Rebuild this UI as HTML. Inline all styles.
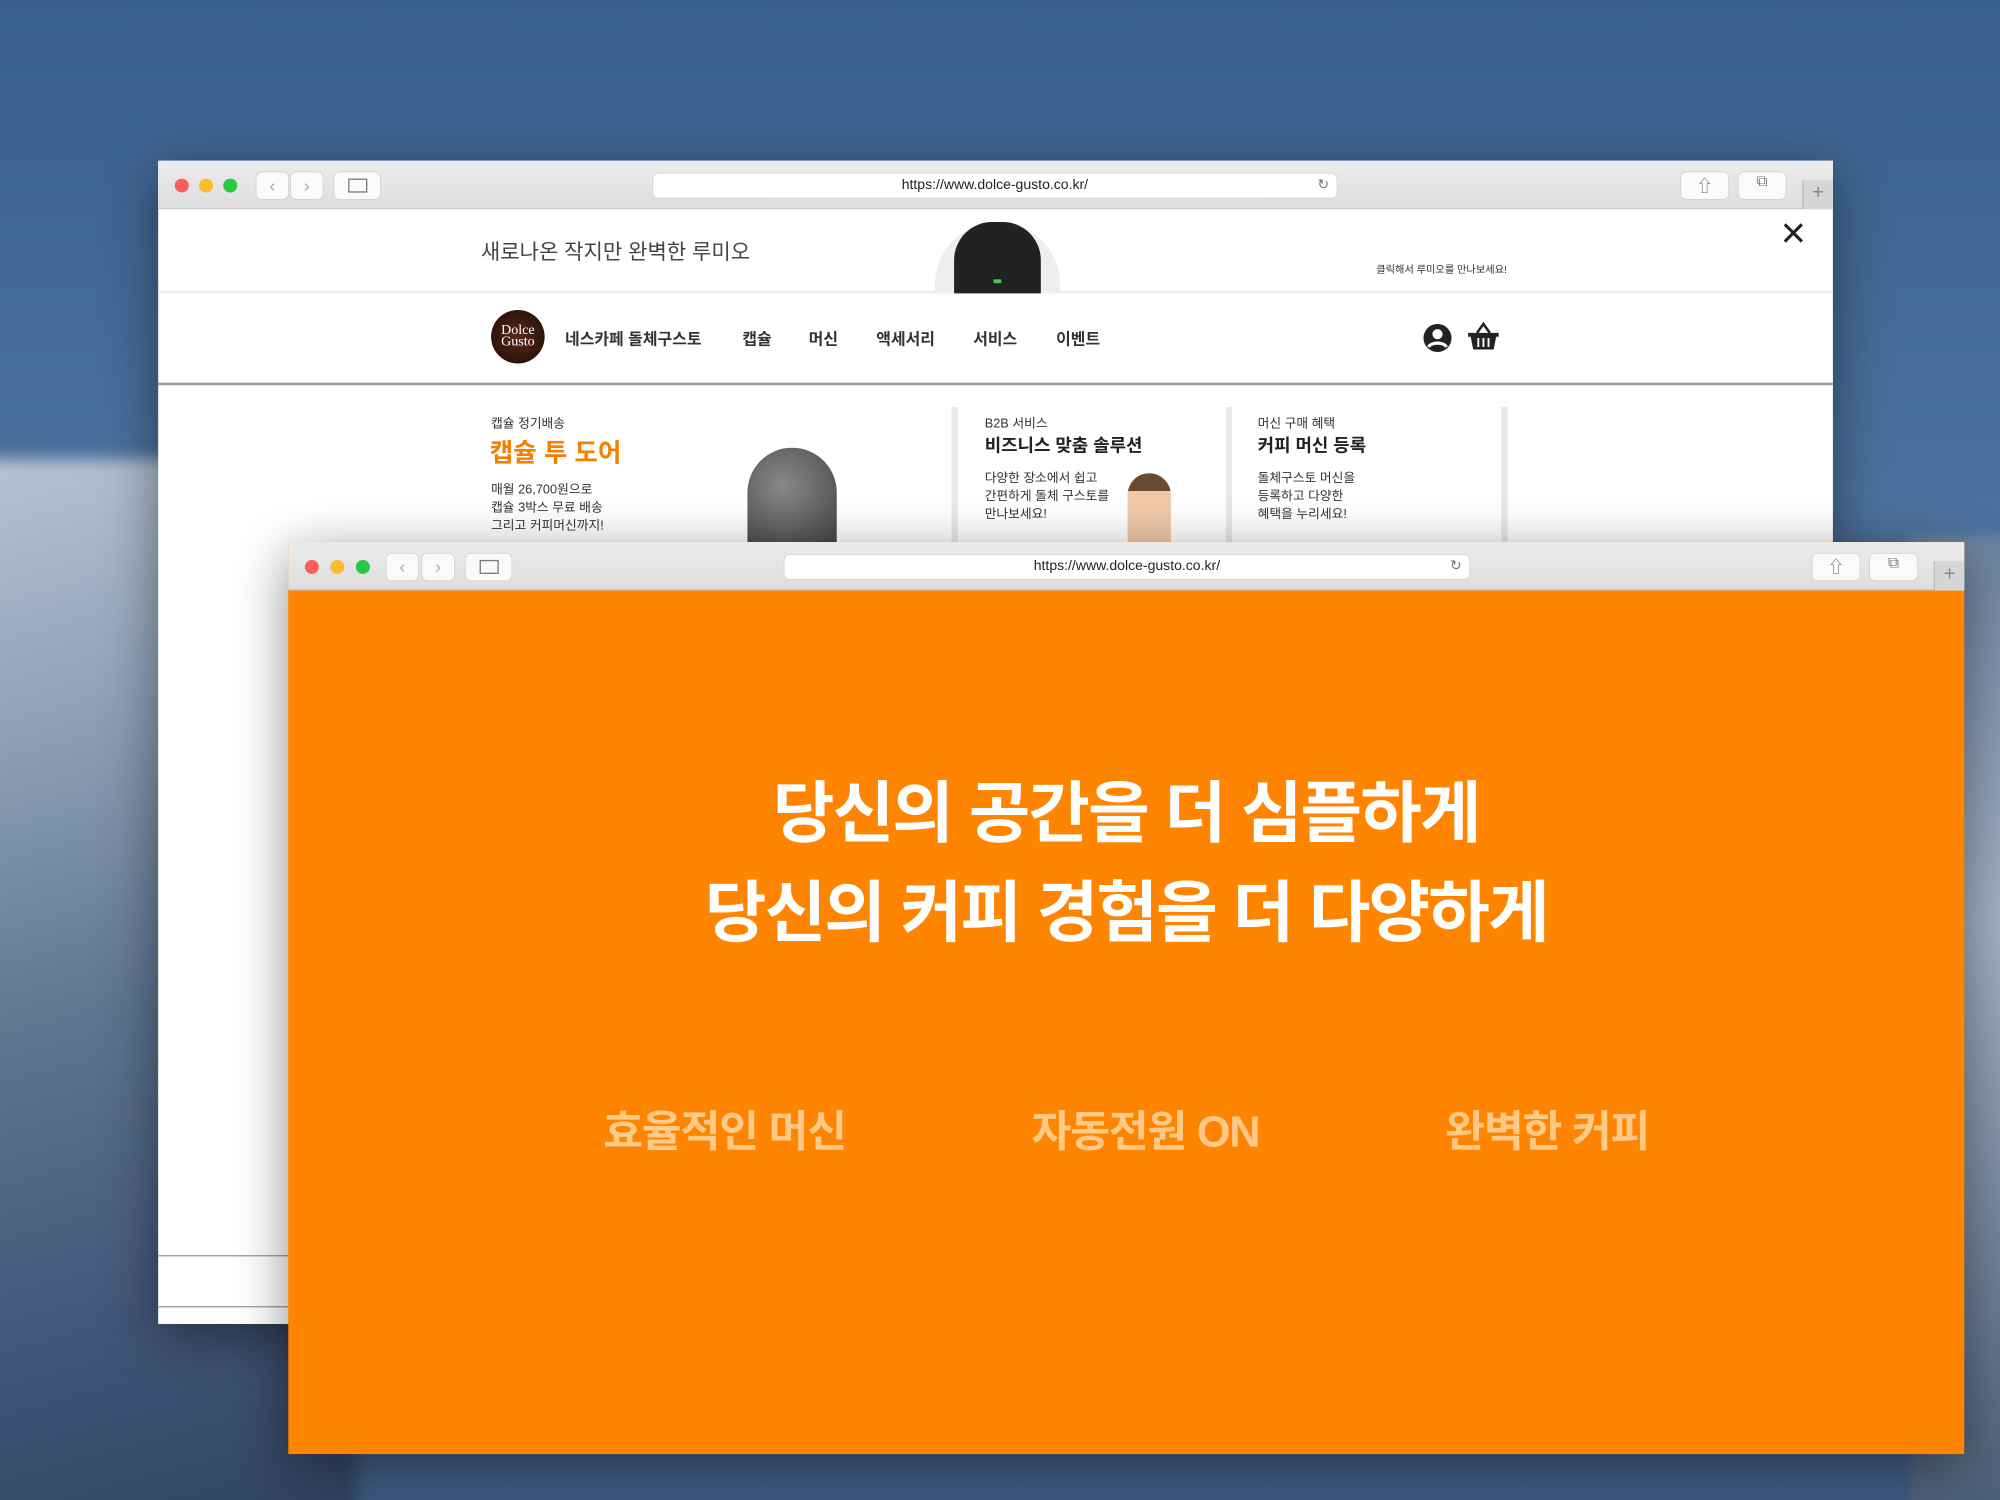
<!DOCTYPE html>
<html><head><meta charset="utf-8"><style>
*{margin:0;padding:0;box-sizing:border-box}
html,body{width:2000px;height:1500px;overflow:hidden}
body{font-family:"Liberation Sans","Noto Sans CJK KR",sans-serif;background:#3f6591}
#s{position:absolute;left:0;top:0;width:1568px;height:1176px;transform:scale(1.27551);transform-origin:0 0;overflow:hidden;
background:linear-gradient(180deg,#3a5f8c 0%,#4a6f9c 30%,#5a7ca6 55%,#6a88ad 75%,#3d5a80 100%)}
.mtn{position:absolute;left:-40px;top:360px;width:320px;height:840px;border-radius:0 80px 0 0;background:linear-gradient(165deg,#b8c4d2 0%,#8da0b5 25%,#5f7590 50%,#44587a 75%,#2f4160 100%);filter:blur(6px)}
.mtn2{position:absolute;right:-10px;top:420px;width:80px;height:760px;background:linear-gradient(180deg,#6d83a0,#a4b2c3 40%,#4c6078);filter:blur(4px)}
.win{position:absolute;background:#fff;box-shadow:0 10px 40px rgba(0,0,0,.45)}
.tb{position:absolute;left:0;top:0;right:0;height:38px;background:linear-gradient(#ececec,#dedede);border-bottom:1px solid #c8c8c8}
.dot{position:absolute;top:14px;width:11px;height:11px;border-radius:50%}
.btn{position:absolute;top:9px;height:21px;background:#fafafa;border-radius:4px;box-shadow:0 0 0 .5px #ccc}
.url{position:absolute;top:10px;height:19px;background:#fff;border-radius:4px;font-size:11px;color:#222;text-align:center;line-height:19px;box-shadow:0 0 0 .5px #ccc}
.plus{position:absolute;right:0;top:15px;width:24px;height:23px;background:#d6d6d6;border-left:1px solid #bbb;color:#888;font-size:16px;text-align:center;line-height:22px}
.t{position:absolute;white-space:nowrap;color:#333}
.b{font-weight:bold}
</style></head><body><div id="s">
<div class="mtn"></div><div class="mtn2"></div>

<!-- back window -->
<div class="win" style="left:124px;top:126px;width:1313px;height:912px">
 <div class="tb">
  <div class="dot" style="left:13px;background:#fc5f57"></div>
  <div class="dot" style="left:32px;background:#fdbc2e"></div>
  <div class="dot" style="left:51px;background:#28c840"></div>
  <div class="btn" style="left:77px;width:25px;color:#aaa;font-size:14px;text-align:center;line-height:20px">‹</div>
  <div class="btn" style="left:104px;width:25px;color:#aaa;font-size:14px;text-align:center;line-height:20px">›</div>
  <div class="btn" style="left:138px;width:36px"><div style="position:absolute;left:11px;top:5px;width:15px;height:11px;border:1px solid #777"></div></div>
  <div class="url" style="left:388px;width:536px">https://www.dolce-gusto.co.kr/<span style="position:absolute;right:6px;color:#777">↻</span></div>
  <div class="btn" style="left:1194px;width:37px;text-align:center;color:#777;font-size:13px">⇧</div>
  <div class="btn" style="left:1239px;width:37px;text-align:center;color:#777;font-size:12px">⧉</div>
  <div class="plus">+</div>
 </div>
 <div style="position:absolute;left:0;right:0;top:38px;height:66px;border-bottom:2px solid #eee">
  <div class="t" style="left:253px;top:20px;font-size:16.5px;color:#444">새로나온 작지만 완벽한 루미오</div>
  <div style="position:absolute;left:609px;top:10px;width:98px;height:56px;border-radius:49px 49px 0 0;background:#eee"></div>
  <div style="position:absolute;left:624px;top:10px;width:68px;height:56px;border-radius:30px 30px 0 0;background:#222"></div>
  <div style="position:absolute;left:655px;top:55px;width:6px;height:3px;background:#4c4"></div>
  <div class="t" style="left:955px;top:42px;font-size:8px">클릭해서 루미오를 만나보세요!</div>
  <div class="t" style="left:1272px;top:0px;font-size:34px;font-weight:200;color:#222">×</div>
 </div>
 <div style="position:absolute;left:0;right:0;top:104px;height:72px;border-bottom:2px solid #9a9a9a">
  <div style="position:absolute;left:261px;top:13px;width:42px;height:42px;border-radius:50%;background:radial-gradient(#5a2a1a,#1a0a05);color:#fff;font-family:'Liberation Serif',serif;font-size:11px;line-height:9px;text-align:center;padding-top:12px">Dolce<br>Gusto</div>
  <div class="t b" style="left:319px;top:25px;font-size:12.5px">네스카페 돌체구스토</div>
  <div class="t b" style="left:458px;top:25px;font-size:12.5px">캡슐</div>
  <div class="t b" style="left:510px;top:25px;font-size:12.5px">머신</div>
  <div class="t b" style="left:563px;top:25px;font-size:12.5px">액세서리</div>
  <div class="t b" style="left:639px;top:25px;font-size:12.5px">서비스</div>
  <div class="t b" style="left:704px;top:25px;font-size:12.5px">이벤트</div>
  <svg style="position:absolute;left:991px;top:23px" width="24" height="24" viewBox="0 0 24 24"><circle cx="12" cy="12" r="11" fill="#222"/><circle cx="12" cy="9" r="4" fill="#fff"/><path d="M5 19c2-4 12-4 14 0" stroke="#fff" stroke-width="2.5" fill="none"/></svg>
  <svg style="position:absolute;left:1026px;top:22px" width="26" height="24" viewBox="0 0 26 24"><path d="M8 9L13 2L18 9" stroke="#222" stroke-width="2" fill="none"/><path d="M1 9h24v3h-2l-2 10H5L3 12H1z" fill="#222"/><path d="M9 13v7M13 13v7M17 13v7" stroke="#fff" stroke-width="1.5"/></svg>
 </div>
 <div class="t" style="left:261px;top:197px;font-size:10px">캡슐 정기배송</div>
 <div class="t b" style="left:260px;top:213px;font-size:20px;color:#f57f00">캡슐 투 도어</div>
 <div class="t" style="left:261px;top:252px;font-size:10px;line-height:14px">매월 26,700원으로<br>캡슐 3박스 무료 배송<br>그리고 커피머신까지!</div>
 <div style="position:absolute;left:462px;top:225px;width:70px;height:75px;border-radius:35px 35px 0 0;background:radial-gradient(circle at 40% 40%,#888,#444)"></div>
 <div style="position:absolute;left:622px;top:193px;width:5px;height:107px;background:#e8e8e8"></div>
 <div style="position:absolute;left:837px;top:193px;width:5px;height:107px;background:#e8e8e8"></div>
 <div style="position:absolute;left:1053px;top:193px;width:5px;height:107px;background:#e8e8e8"></div>
 <div class="t" style="left:648px;top:197px;font-size:10px">B2B 서비스</div>
 <div class="t b" style="left:648px;top:213px;font-size:14px;color:#222">비즈니스 맞춤 솔루션</div>
 <div class="t" style="left:648px;top:243px;font-size:10px;line-height:14px">다양한 장소에서 쉽고<br>간편하게 돌체 구스토를<br>만나보세요!</div>
 <div style="position:absolute;left:760px;top:245px;width:34px;height:55px;border-radius:17px 17px 0 0;background:linear-gradient(#6a4a30 0,#6a4a30 25%,#f0c8a8 25%)"></div>
 <div class="t" style="left:862px;top:197px;font-size:10px">머신 구매 혜택</div>
 <div class="t b" style="left:862px;top:213px;font-size:14px;color:#222">커피 머신 등록</div>
 <div class="t" style="left:862px;top:243px;font-size:10px;line-height:14px">돌체구스토 머신을<br>등록하고 다양한<br>혜택을 누리세요!</div>
 <div style="position:absolute;left:0;top:858px;width:110px;height:1px;background:#999"></div>
 <div style="position:absolute;left:0;top:898px;width:110px;height:1px;background:#999"></div>
</div>

<!-- front window -->
<div class="win" style="left:226px;top:425px;width:1314px;height:715px;background:#ff8500">
 <div class="tb">
  <div class="dot" style="left:13px;background:#fc5f57"></div>
  <div class="dot" style="left:33px;background:#fdbc2e"></div>
  <div class="dot" style="left:53px;background:#28c840"></div>
  <div class="btn" style="left:77px;width:25px;color:#aaa;font-size:14px;text-align:center;line-height:20px">‹</div>
  <div class="btn" style="left:105px;width:25px;color:#aaa;font-size:14px;text-align:center;line-height:20px">›</div>
  <div class="btn" style="left:139px;width:36px"><div style="position:absolute;left:11px;top:5px;width:15px;height:11px;border:1px solid #777"></div></div>
  <div class="url" style="left:389px;width:537px">https://www.dolce-gusto.co.kr/<span style="position:absolute;right:6px;color:#777">↻</span></div>
  <div class="btn" style="left:1195px;width:37px;text-align:center;color:#777;font-size:13px">⇧</div>
  <div class="btn" style="left:1240px;width:37px;text-align:center;color:#777;font-size:12px">⧉</div>
  <div class="plus">+</div>
 </div>
 <div style="position:absolute;left:0;right:0;top:175px;text-align:center;color:#fff;font-weight:bold;font-size:52.5px;line-height:78px;letter-spacing:-1.5px">당신의 공간을 더 심플하게<br>당신의 커피 경험을 더 다양하게</div>
 <div class="t b" style="left:242px;top:435px;width:200px;text-align:center;font-size:34px;color:#ffc987;letter-spacing:-1px">효율적인 머신</div>
 <div class="t b" style="left:572px;top:435px;width:200px;text-align:center;font-size:34px;color:#ffc987;letter-spacing:-1px">자동전원 ON</div>
 <div class="t b" style="left:887px;top:435px;width:200px;text-align:center;font-size:34px;color:#ffc987;letter-spacing:-1px">완벽한 커피</div>
</div>
</div></body></html>
